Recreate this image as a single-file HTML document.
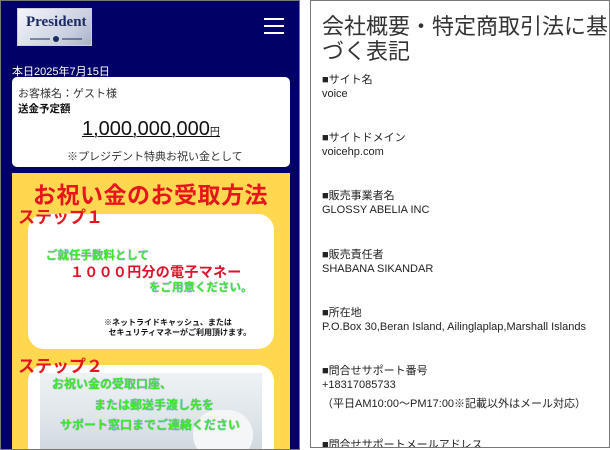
<!DOCTYPE html>
<html><head><meta charset="utf-8"><style>
*{margin:0;padding:0;box-sizing:border-box}
body{width:610px;height:450px;background:#fff;position:relative;overflow:hidden;font-family:"Liberation Sans","Noto Sans CJK JP",sans-serif}
#L{position:absolute;left:0;top:0;width:300px;height:450px;background:#000066;border:1px solid #777;overflow:hidden}
#R{position:absolute;left:310px;top:0;width:300px;height:448px;border:1px solid #777;background:#fff;overflow:hidden}
.abs{position:absolute}
.logo{left:16px;top:7px;width:75px;height:38px;background:linear-gradient(135deg,#f4f6fb,#c9cfe0 70%,#a9b1c8);border:1px solid #ccd}
.ham{left:263px;width:20px;height:2px;background:#fff}
.wb{left:11px;top:76px;width:278px;height:90px;background:#fff;border-radius:5px}
.yb{left:11px;top:172px;width:278px;height:276px;background:#ffd84f}
.card{left:27px;width:246px;background:#fff;border-radius:16px;overflow:hidden}
.red{color:#e8141e;font-weight:bold}
.grn{color:#3ee82a;font-weight:bold;text-shadow:0 0 1px #6a6af0}
.t{font-size:11px;color:#222;left:11px}
</style></head><body>
<div id="L">
 <div class="abs logo">
  <div style="position:absolute;left:8px;top:5px;font:bold 15px 'Liberation Serif',serif;color:#1c2a63">President</div>
  <svg style="position:absolute;left:10px;top:26px" width="56" height="8"><path d="M2 4 H22 M34 4 H54" stroke="#1c2a63" stroke-width="1"/><circle cx="28" cy="4" r="3" fill="#1c2a63"/></svg>
 </div>
 <div class="abs ham" style="top:17px"></div>
 <div class="abs ham" style="top:24px"></div>
 <div class="abs ham" style="top:31px"></div>
 <div class="abs" style="left:11px;top:62px;font-size:11px;color:#fff">本日2025年7月15日</div>
 <div class="abs wb">
  <div class="abs" style="left:6px;top:8px;font-size:11px;color:#333">お客様名：ゲスト様</div>
  <div class="abs" style="left:6px;top:24px;font-size:10.5px;font-weight:bold;color:#111">送金予定額</div>
  <div class="abs" style="left:70px;top:41px;font-size:20px;color:#111;text-decoration:underline;text-decoration-thickness:1px">1,000,000,000<span style="font-size:10px">円</span></div>
  <div class="abs" style="left:55px;top:71px;font-size:11px;color:#333">※プレジデント特典お祝い金として</div>
 </div>
 <div class="abs yb">
  <div class="abs red" style="left:21px;top:3px;font-size:23px;letter-spacing:0.5px">お祝い金のお受取方法</div>
 </div>
 <div class="abs card" style="top:213px;height:135px">
  <div class="abs grn" style="left:18px;top:33px;font-size:11.5px">ご就任手数料として</div>
  <div class="abs red" style="left:42px;top:48px;font-size:14px;color:#e0102a;letter-spacing:0.3px">１０００円分の電子マネー</div>
  <div class="abs grn" style="left:121px;top:65px;font-size:11.5px">をご用意ください。</div>
  <div class="abs" style="left:76px;top:104px;font-size:8px;font-weight:bold;color:#111;line-height:10px">※ネットライドキャッシュ、または<br>&nbsp;&nbsp;セキュリティマネーがご利用頂けます。</div>
 </div>
 <div class="abs red" style="left:17px;top:202px;font-size:17px">ステップ１</div>
 <div class="abs card" style="top:364px;height:100px">
  <div class="abs" style="left:12px;top:8px;width:222px;height:100px;background:linear-gradient(180deg,#eef2f5,#dde4e9 50%,#c6ced6)"></div>
  <div class="abs" style="left:165px;top:45px;width:60px;height:50px;background:#f4f6f8;border-radius:30px"></div>
  <div class="abs grn" style="left:24px;top:10px;font-size:12px">お祝い金の受取口座、</div>
  <div class="abs grn" style="left:66px;top:31px;font-size:12px">または郵送手渡し先を</div>
  <div class="abs grn" style="left:32px;top:51px;font-size:12px">サポート窓口までご連絡ください</div>
 </div>
 <div class="abs red" style="left:17px;top:351px;font-size:17px">ステップ２</div>
</div>
<div id="R">
 <div class="abs" style="left:11px;top:13px;font-size:22px;line-height:25px;color:#333;width:295px">会社概要・特定商取引法に基づく表記</div>
 <div class="abs t" style="top:70px">■サイト名</div>
 <div class="abs t" style="top:87px">voice</div>
 <div class="abs t" style="top:128px">■サイトドメイン</div>
 <div class="abs t" style="top:145px">voicehp.com</div>
 <div class="abs t" style="top:186px">■販売事業者名</div>
 <div class="abs t" style="top:203px">GLOSSY ABELIA INC</div>
 <div class="abs t" style="top:245px">■販売責任者</div>
 <div class="abs t" style="top:262px">SHABANA SIKANDAR</div>
 <div class="abs t" style="top:303px">■所在地</div>
 <div class="abs t" style="top:320px">P.O.Box 30,Beran Island, Ailinglaplap,Marshall Islands</div>
 <div class="abs t" style="top:361px">■問合せサポート番号</div>
 <div class="abs t" style="top:378px">+18317085733</div>
 <div class="abs t" style="top:394px">（平日AM10:00～PM17:00※記載以外はメール対応）</div>
 <div class="abs t" style="top:435px">■問合せサポートメールアドレス</div>
</div>
</body></html>
